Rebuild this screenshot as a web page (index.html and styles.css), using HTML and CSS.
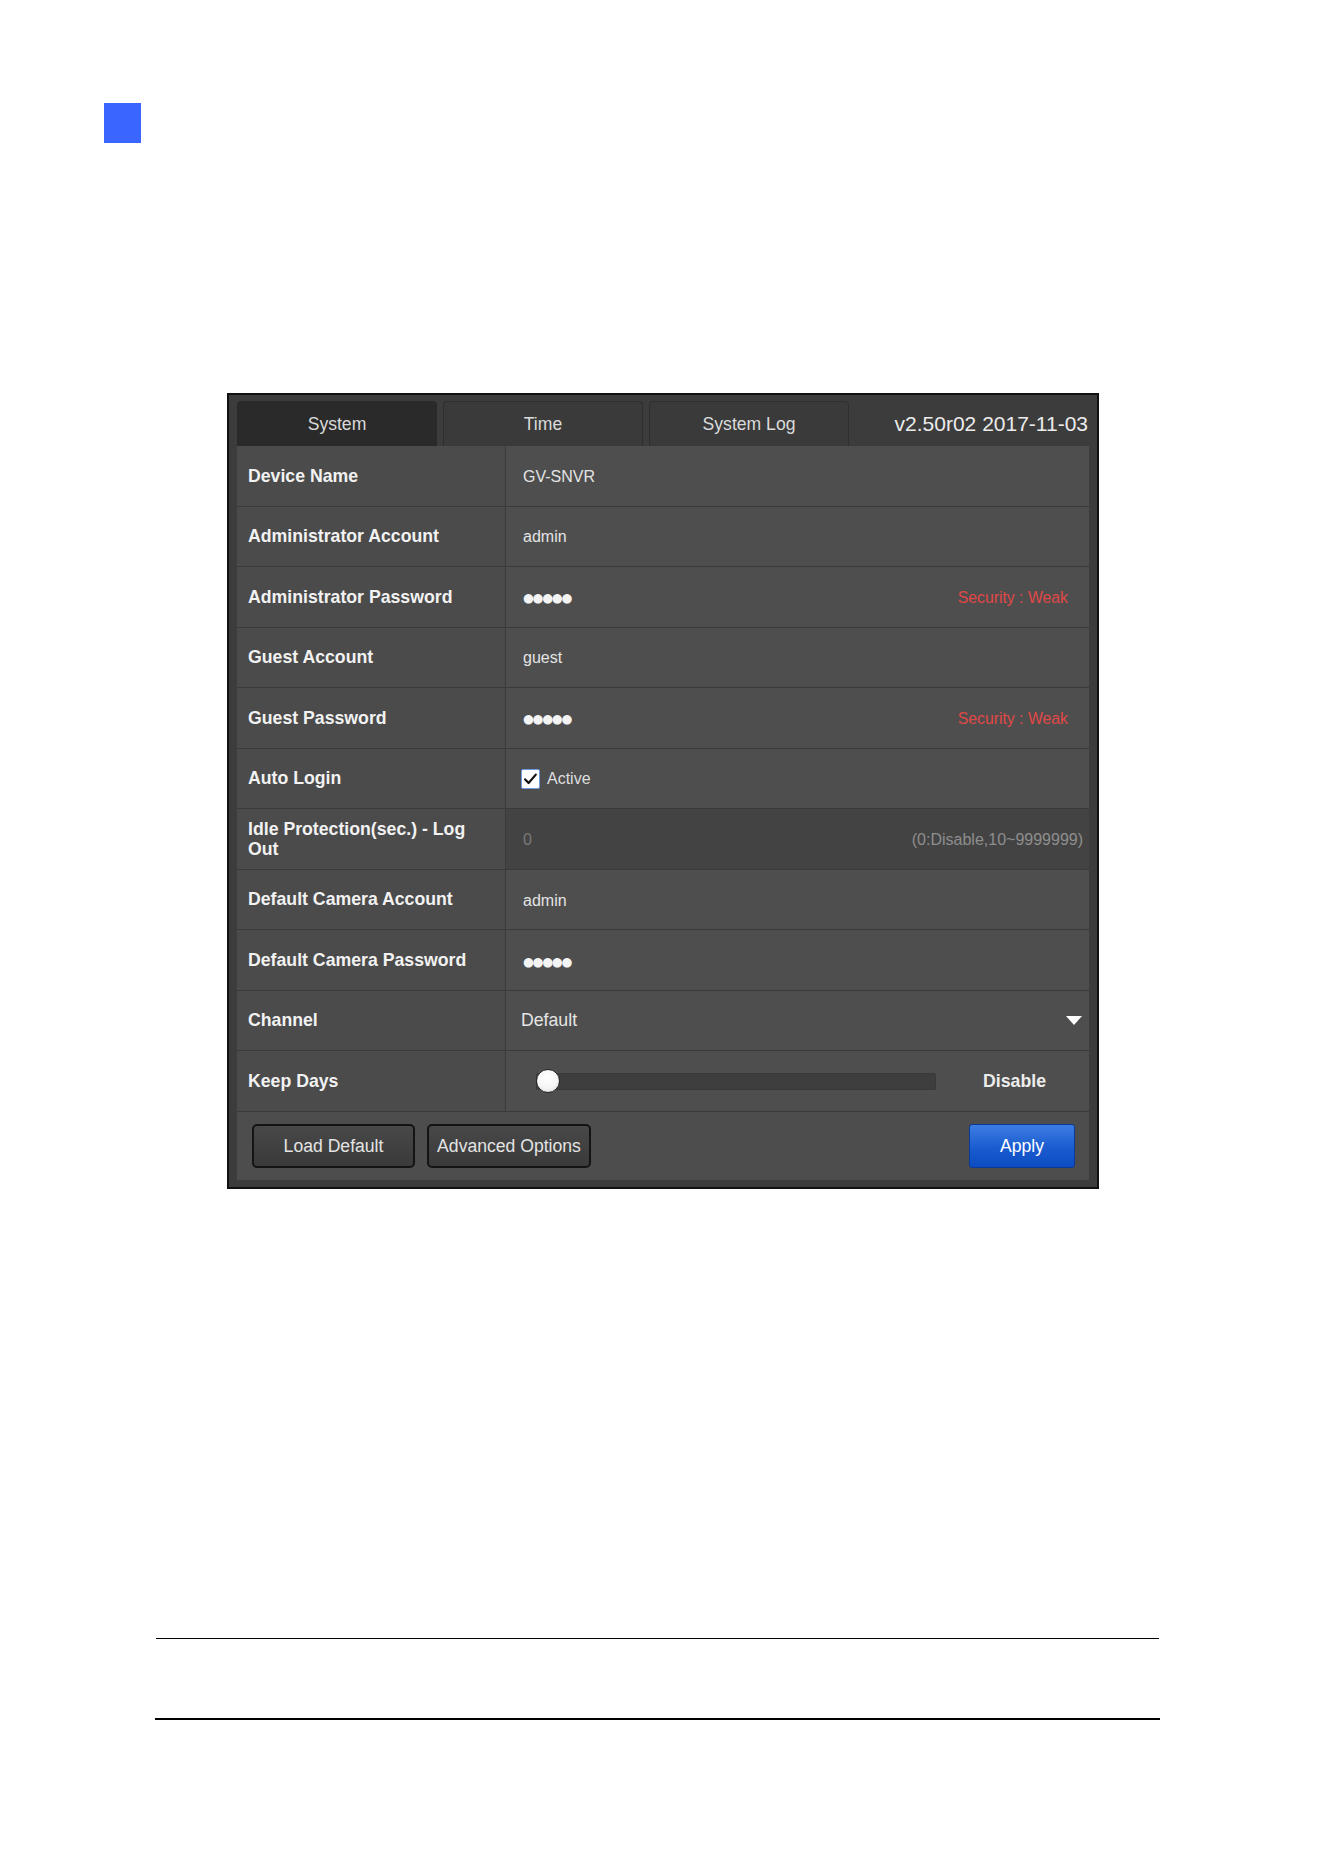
FILE: index.html
```html
<!DOCTYPE html>
<html lang="en">
<head>
<meta charset="utf-8">
<title>System Settings</title>
<link rel="stylesheet" href="styles.css">
</head>
<body>
<div class="page">
  <div class="chapter-mark"></div>

  <section class="settings">
    <div class="tabbar">
      <div class="tab active">System</div>
      <div class="tab">Time</div>
      <div class="tab">System Log</div>
      <div class="version">v2.50r02 2017-11-03</div>
    </div>

    <div class="form">
      <div class="row">
        <div class="label">Device Name</div>
        <div class="value text">GV-SNVR</div>
      </div>
      <div class="row">
        <div class="label">Administrator Account</div>
        <div class="value text">admin</div>
      </div>
      <div class="row">
        <div class="label">Administrator Password</div>
        <div class="value text"><span class="dots">●●●●●</span><span class="strength">Security : Weak</span></div>
      </div>
      <div class="row">
        <div class="label">Guest Account</div>
        <div class="value text">guest</div>
      </div>
      <div class="row">
        <div class="label">Guest Password</div>
        <div class="value text"><span class="dots">●●●●●</span><span class="strength">Security : Weak</span></div>
      </div>
      <div class="row">
        <div class="label">Auto Login</div>
        <div class="value">
          <span class="checkbox">
            <svg viewBox="0 0 19 20" width="19" height="20">
              <rect x="0.5" y="0.5" width="18" height="19" rx="1.5" fill="#ffffff" stroke="#6d9ae0"/>
              <path d="M4.2 10.4 L7.6 14 L14.8 5.6" fill="none" stroke="#111111" stroke-width="2.2" stroke-linecap="round" stroke-linejoin="round"/>
            </svg>
          </span>
          <span class="check-label">Active</span>
        </div>
      </div>
      <div class="row">
        <div class="label">Idle Protection(sec.) - Log Out</div>
        <div class="value text disabled"><span class="placeholder">0</span><span class="hint">(0:Disable,10~9999999)</span></div>
      </div>
      <div class="row">
        <div class="label">Default Camera Account</div>
        <div class="value text">admin</div>
      </div>
      <div class="row">
        <div class="label">Default Camera Password</div>
        <div class="value text"><span class="dots">●●●●●</span></div>
      </div>
      <div class="row">
        <div class="label">Channel</div>
        <div class="value select"><span class="select-text">Default</span><span class="caret"></span></div>
      </div>
      <div class="row">
        <div class="label">Keep Days</div>
        <div class="value range">
          <div class="slider"><span class="thumb"></span></div>
          <span class="range-value">Disable</span>
        </div>
      </div>
    </div>

    <div class="actions">
      <button class="btn load">Load Default</button>
      <button class="btn advanced">Advanced Options</button>
      <button class="btn apply">Apply</button>
    </div>
  </section>

  <div class="rule thin"></div>
  <div class="rule thick"></div>
</div>
</body>
</html>
```

FILE: styles.css
```css
html, body {
  margin: 0;
  padding: 0;
  background: #ffffff;
}

body {
  font-family: "Liberation Sans", Arial, Helvetica, sans-serif;
}

.page {
  padding-top: 103px;
}

/* blue chapter tab in the page corner */
.chapter-mark {
  width: 37px;
  height: 40px;
  margin-left: 104px;
  background: #3a66ff;
}

/* settings panel */
.settings {
  margin: 250px 0 0 227px;
  width: 872px;
  height: 796px;
  box-sizing: border-box;
  border: 2px solid #111111;
  background: #3c3c3c;
  padding: 6px 8px 7px 8px;
  display: flex;
  flex-direction: column;
}

.tabbar {
  display: flex;
  height: 45px;
  gap: 6px;
  flex: none;
}

.tab {
  width: 200px;
  box-sizing: border-box;
  background: #3a3a3a;
  border: 1px solid #2f2f2f;
  border-bottom: none;
  border-radius: 4px 4px 0 0;
  display: flex;
  align-items: center;
  justify-content: center;
  color: #dadada;
  font-size: 17.6px;
}

.tab.active {
  background: #2a2a2a;
  border-color: #2a2a2a;
}

.version {
  margin-left: auto;
  align-self: center;
  padding-right: 1px;
  color: #ececec;
  font-size: 21px;
}

/* form table */
.form {
  display: flex;
  flex-direction: column;
  flex: none;
}

.row {
  display: flex;
  height: 60.55px;
  box-sizing: border-box;
  border-bottom: 1px solid #3a3a3a;
}

.label {
  width: 269px;
  flex: none;
  box-sizing: border-box;
  padding: 0 18px 0 11px;
  border-right: 1px solid #3a3a3a;
  background: #4b4b4b;
  display: flex;
  align-items: center;
  color: #f2f2f2;
  font-weight: bold;
  font-size: 17.7px;
  line-height: 20.5px;
}

.value {
  flex: 1;
  display: flex;
  align-items: center;
  padding: 0 21px 0 12px;
  background: #4e4e4e;
  color: #e4e4e4;
  font-size: 16px;
}

/* text inputs are inset a little further than the other controls */
.value.text {
  padding-left: 17px;
  padding-top: 2px;
}

.dots {
  font-family: "DejaVu Sans", sans-serif;
  font-size: 12.5px;
  letter-spacing: -1.3px;
  color: #f4f4f4;
}

.strength {
  margin-left: auto;
  color: #e04848;
  font-size: 15.8px;
}

.checkbox {
  display: inline-flex;
  margin-left: 3px;
}

.check-label {
  margin-left: 7px;
  color: #dedede;
}

.value.disabled {
  background: #434343;
  padding-right: 6px;
}

.placeholder {
  color: #7a7a7a;
}

.hint {
  margin-left: auto;
  color: #8e8e8e;
}

.value.select {
  padding-left: 15px;
  padding-right: 7px;
}

.select-text {
  font-size: 17.7px;
  color: #e6e6e6;
}

.caret {
  margin-left: auto;
  width: 0;
  height: 0;
  border-left: 8.5px solid transparent;
  border-right: 8.5px solid transparent;
  border-top: 9px solid #ffffff;
}

.value.range {
  padding-right: 43px;
}

.slider {
  position: relative;
  width: 400px;
  height: 17px;
  margin-left: 18px;
  box-sizing: border-box;
  background: #3e3e3e;
  border: 1px solid #393939;
  border-radius: 2px;
}

/* handle sits over the left end of the track */
.thumb {
  position: absolute;
  left: -1px;
  top: 50%;
  width: 24px;
  height: 24px;
  margin-top: -12px;
  box-sizing: border-box;
  border-radius: 50%;
  border: 1px solid #262626;
  background: radial-gradient(circle at 45% 35%, #ffffff 0%, #f6f6f6 55%, #d4d4d4 100%);
}

.range-value {
  margin-left: auto;
  color: #ececec;
  font-weight: bold;
  font-size: 17.7px;
}

/* button bar */
.actions {
  flex: none;
  height: 68px;
  box-sizing: border-box;
  display: flex;
  align-items: flex-start;
  padding: 12px 14px 0 15px;
  background: #4d4d4d;
}

.btn {
  height: 44px;
  box-sizing: border-box;
  border: 2px solid #141414;
  border-radius: 5px;
  background: linear-gradient(#484848, #3a3a3a);
  color: #e4e4e4;
  font-family: "Liberation Sans", Arial, Helvetica, sans-serif;
  font-size: 17.6px;
  padding: 0;
}

.btn.load {
  width: 163px;
}

.btn.advanced {
  width: 164px;
  margin-left: 12px;
}

.btn.apply {
  width: 106px;
  height: 44px;
  margin-left: auto;
  border: 1px solid #0a3a98;
  border-radius: 3px;
  background: linear-gradient(#3d7de2, #1a5bd0 55%, #0d4cc2);
  color: #ffffff;
}

/* page footer rules */
.rule {
  background: #000000;
}

.rule.thin {
  margin: 449px 0 0 156px;
  width: 1003px;
  height: 1px;
}

.rule.thick {
  margin: 79px 0 0 155px;
  width: 1005px;
  height: 2px;
}
```
